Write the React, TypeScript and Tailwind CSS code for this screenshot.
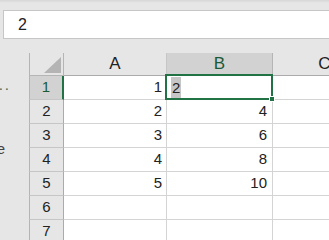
import React from "react";

const rows: [number, string, string][] = [
  [1, "1", "2"],
  [2, "2", "4"],
  [3, "3", "6"],
  [4, "4", "8"],
  [5, "5", "10"],
  [6, "", ""],
  [7, "", ""],
];

export default function App() {
  return (
    <div className="w-[329px] h-[240px] overflow-hidden bg-[#e6e6e6] font-['Liberation_Sans',Arial,sans-serif] text-[#222]">
      <div className="h-[3px] bg-gradient-to-b from-[#d6d6d6] to-[#e6e6e6]" />
      {/* formula bar */}
      <div className="pt-[7px] pl-[3px]">
        <div className="h-[29px] bg-white border border-r-0 border-[#c6c6c6] flex items-center pl-[14px] text-[16px] text-[#222]">
          2
        </div>
      </div>

      <div className="flex mt-[14px]">
        {/* clipped side panel */}
        <div className="w-[29px] shrink-0 overflow-hidden flex flex-col items-end text-[#444] text-[15px]">
          <div className="mt-[23px] h-[18px] leading-[18px] pr-[18px] whitespace-nowrap tracking-[2px] text-[#3d6b58]">...</div>
          <div className="mt-[46px] h-[18px] leading-[18px] pr-[24px] whitespace-nowrap">Name</div>
        </div>

        {/* grid */}
        <div className="relative flex-1">
          <div className="grid grid-cols-[35px_103px_106px_103px]">
            {/* header row */}
            <div className="h-[23px] border-l border-r border-b border-[#b5b5b5] flex items-end justify-end pr-[2px] pb-[2px]">
              <svg width="17" height="16" viewBox="0 0 17 16">
                <polygon points="17,0 17,16 0,16" fill="#b4b4b4" />
              </svg>
            </div>
            <div className="h-[23px] border-r border-b border-r-[#c6c6c6] border-b-[#ababab] flex items-center justify-center text-[17px]">A</div>
            <div className="h-[23px] border-r border-r-[#b5b5b5] border-b-2 border-b-[#217346] bg-[#d2d2d2] flex items-center justify-center text-[17px] text-[#1c5a37]">B</div>
            <div className="h-[23px] border-b border-[#ababab] flex items-center justify-center text-[17px]">C</div>

            {rows.map(([n, a, b]) => (
              <React.Fragment key={n}>
                <div
                  className={
                    n === 1
                      ? "h-[24px] border-l border-l-[#b5b5b5] border-b border-b-[#c6c6c6] border-r-2 border-r-[#217346] bg-[#d2d2d2] flex items-center justify-center text-[15px] text-[#1c5a37]"
                      : "h-[24px] border-l border-l-[#b5b5b5] border-b border-b-[#c6c6c6] border-r border-r-[#ababab] flex items-center justify-center text-[15px]"
                  }
                >
                  {n}
                </div>
                <div className="h-[24px] bg-white border-r border-b border-[#d4d4d4] flex items-center justify-end pr-[4px] text-[15px]">
                  {a}
                </div>
                {n === 1 ? (
                  <div className="h-[24px] bg-white border-r border-b border-[#d4d4d4] flex items-center pl-[4px] text-[15px]">
                    <span className="bg-[#c6c6c6] h-[22px] leading-[22px] px-[1px]">2</span>
                  </div>
                ) : (
                  <div className="h-[24px] bg-white border-r border-b border-[#d4d4d4] flex items-center justify-end pr-[5px] text-[15px]">
                    {b}
                  </div>
                )}
                <div className="h-[24px] bg-white border-b border-[#d4d4d4]" />
              </React.Fragment>
            ))}
          </div>

          {/* active cell outline */}
          <div className="absolute left-[136px] top-[21px] w-[108px] h-[26px] border-2 border-[#217346] pointer-events-none">
            <div className="absolute right-[-4px] bottom-[-4px] w-[6px] h-[6px] bg-[#217346] border border-white" />
          </div>
        </div>
      </div>
    </div>
  );
}
